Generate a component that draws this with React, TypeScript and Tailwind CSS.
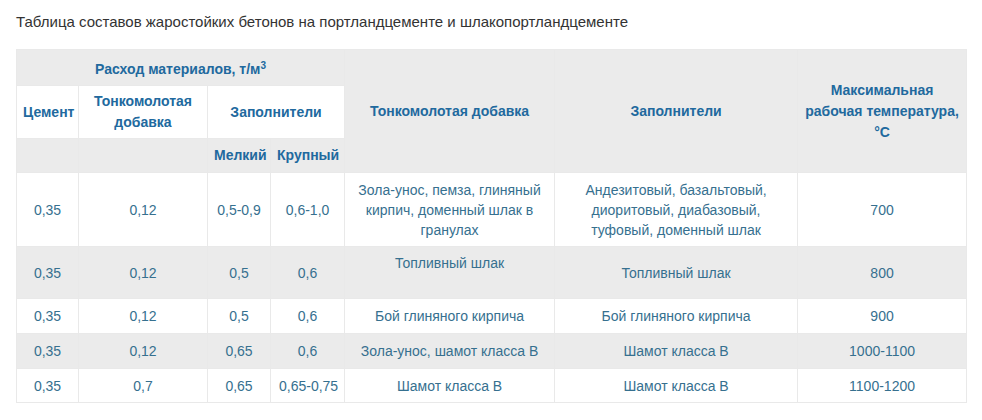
import React from "react";

type Row = {
  cells: string[];
  h: string;
  topCol?: number;
};

const rows: Row[] = [
  {
    cells: [
      "0,35",
      "0,12",
      "0,5-0,9",
      "0,6-1,0",
      "Зола-унос, пемза, глиняный кирпич, доменный шлак в гранулах",
      "Андезитовый, базальтовый, диоритовый, диабазовый, туфовый, доменный шлак",
      "700",
    ],
    h: "h-[74px]",
  },
  {
    cells: ["0,35", "0,12", "0,5", "0,6", "Топливный шлак", "Топливный шлак", "800"],
    h: "h-[52px]",
    topCol: 4,
  },
  {
    cells: ["0,35", "0,12", "0,5", "0,6", "Бой глиняного кирпича", "Бой глиняного кирпича", "900"],
    h: "h-[35px]",
  },
  {
    cells: ["0,35", "0,12", "0,65", "0,6", "Зола-унос, шамот класса В", "Шамот класса В", "1000-1100"],
    h: "h-[35px]",
  },
  {
    cells: ["0,35", "0,7", "0,65", "0,65-0,75", "Шамот класса В", "Шамот класса В", "1100-1200"],
    h: "h-[34px]",
  },
];

const th = "border border-[#e9e9e9] px-[6px] text-center align-middle font-bold leading-[21px] text-[#21699e]";
const td = "border border-[#e9e9e9] px-[8px] text-center align-middle leading-[20px] text-[#36708f]";

export default function App() {
  return (
    <div
      className="min-h-screen bg-white px-[16px] pt-[12px] text-[14px]"
      style={{ fontFamily: '"Liberation Sans", Arial, sans-serif' }}
    >
      <p className="text-[15px] leading-[20px] text-[#333333]">
        Таблица составов жаростойких бетонов на портландцементе и шлакопортландцементе
      </p>

      <table className="mt-[17px] w-[950px] table-fixed border-collapse">
        <colgroup>
          <col className="w-[62px]" />
          <col className="w-[129px]" />
          <col className="w-[63px]" />
          <col className="w-[74px]" />
          <col className="w-[210px]" />
          <col className="w-[243px]" />
          <col className="w-[169px]" />
        </colgroup>
        <thead>
          <tr className="h-[36px] bg-[#ebebeb]">
            <th colSpan={4} className={`${th} pt-[3px]`}>
              Расход материалов, т/м<sup className="text-[10px]">3</sup>
            </th>
            <th rowSpan={3} className={th}>
              Тонкомолотая добавка
            </th>
            <th rowSpan={3} className={th}>
              Заполнители
            </th>
            <th rowSpan={3} className={`${th} px-[4px]`}>
              Максимальная рабочая температура, °С
            </th>
          </tr>
          <tr className="h-[53px] bg-white">
            <th className={`${th} px-[2px]`}>Цемент</th>
            <th className={th}>Тонкомолотая добавка</th>
            <th colSpan={2} className={th}>
              Заполнители
            </th>
          </tr>
          <tr className="h-[34px] bg-[#ebebeb]">
            <th className={th}></th>
            <th className={th}></th>
            <th className={`${th} px-[2px]`}>Мелкий</th>
            <th className={`${th} px-[2px]`}>Крупный</th>
          </tr>
        </thead>
        <tbody>
          {rows.map((r, i) => (
            <tr key={i} className={`${r.h} ${i % 2 === 1 ? "bg-[#ebebeb]" : "bg-white"}`}>
              {r.cells.map((c, j) => (
                <td
                  key={j}
                  className={`${td} ${j === 3 ? "px-0 whitespace-nowrap" : ""} ${
                    r.topCol === j ? "!align-top pt-[6px]" : ""
                  }`}
                >
                  {c}
                </td>
              ))}
            </tr>
          ))}
        </tbody>
      </table>
    </div>
  );
}
